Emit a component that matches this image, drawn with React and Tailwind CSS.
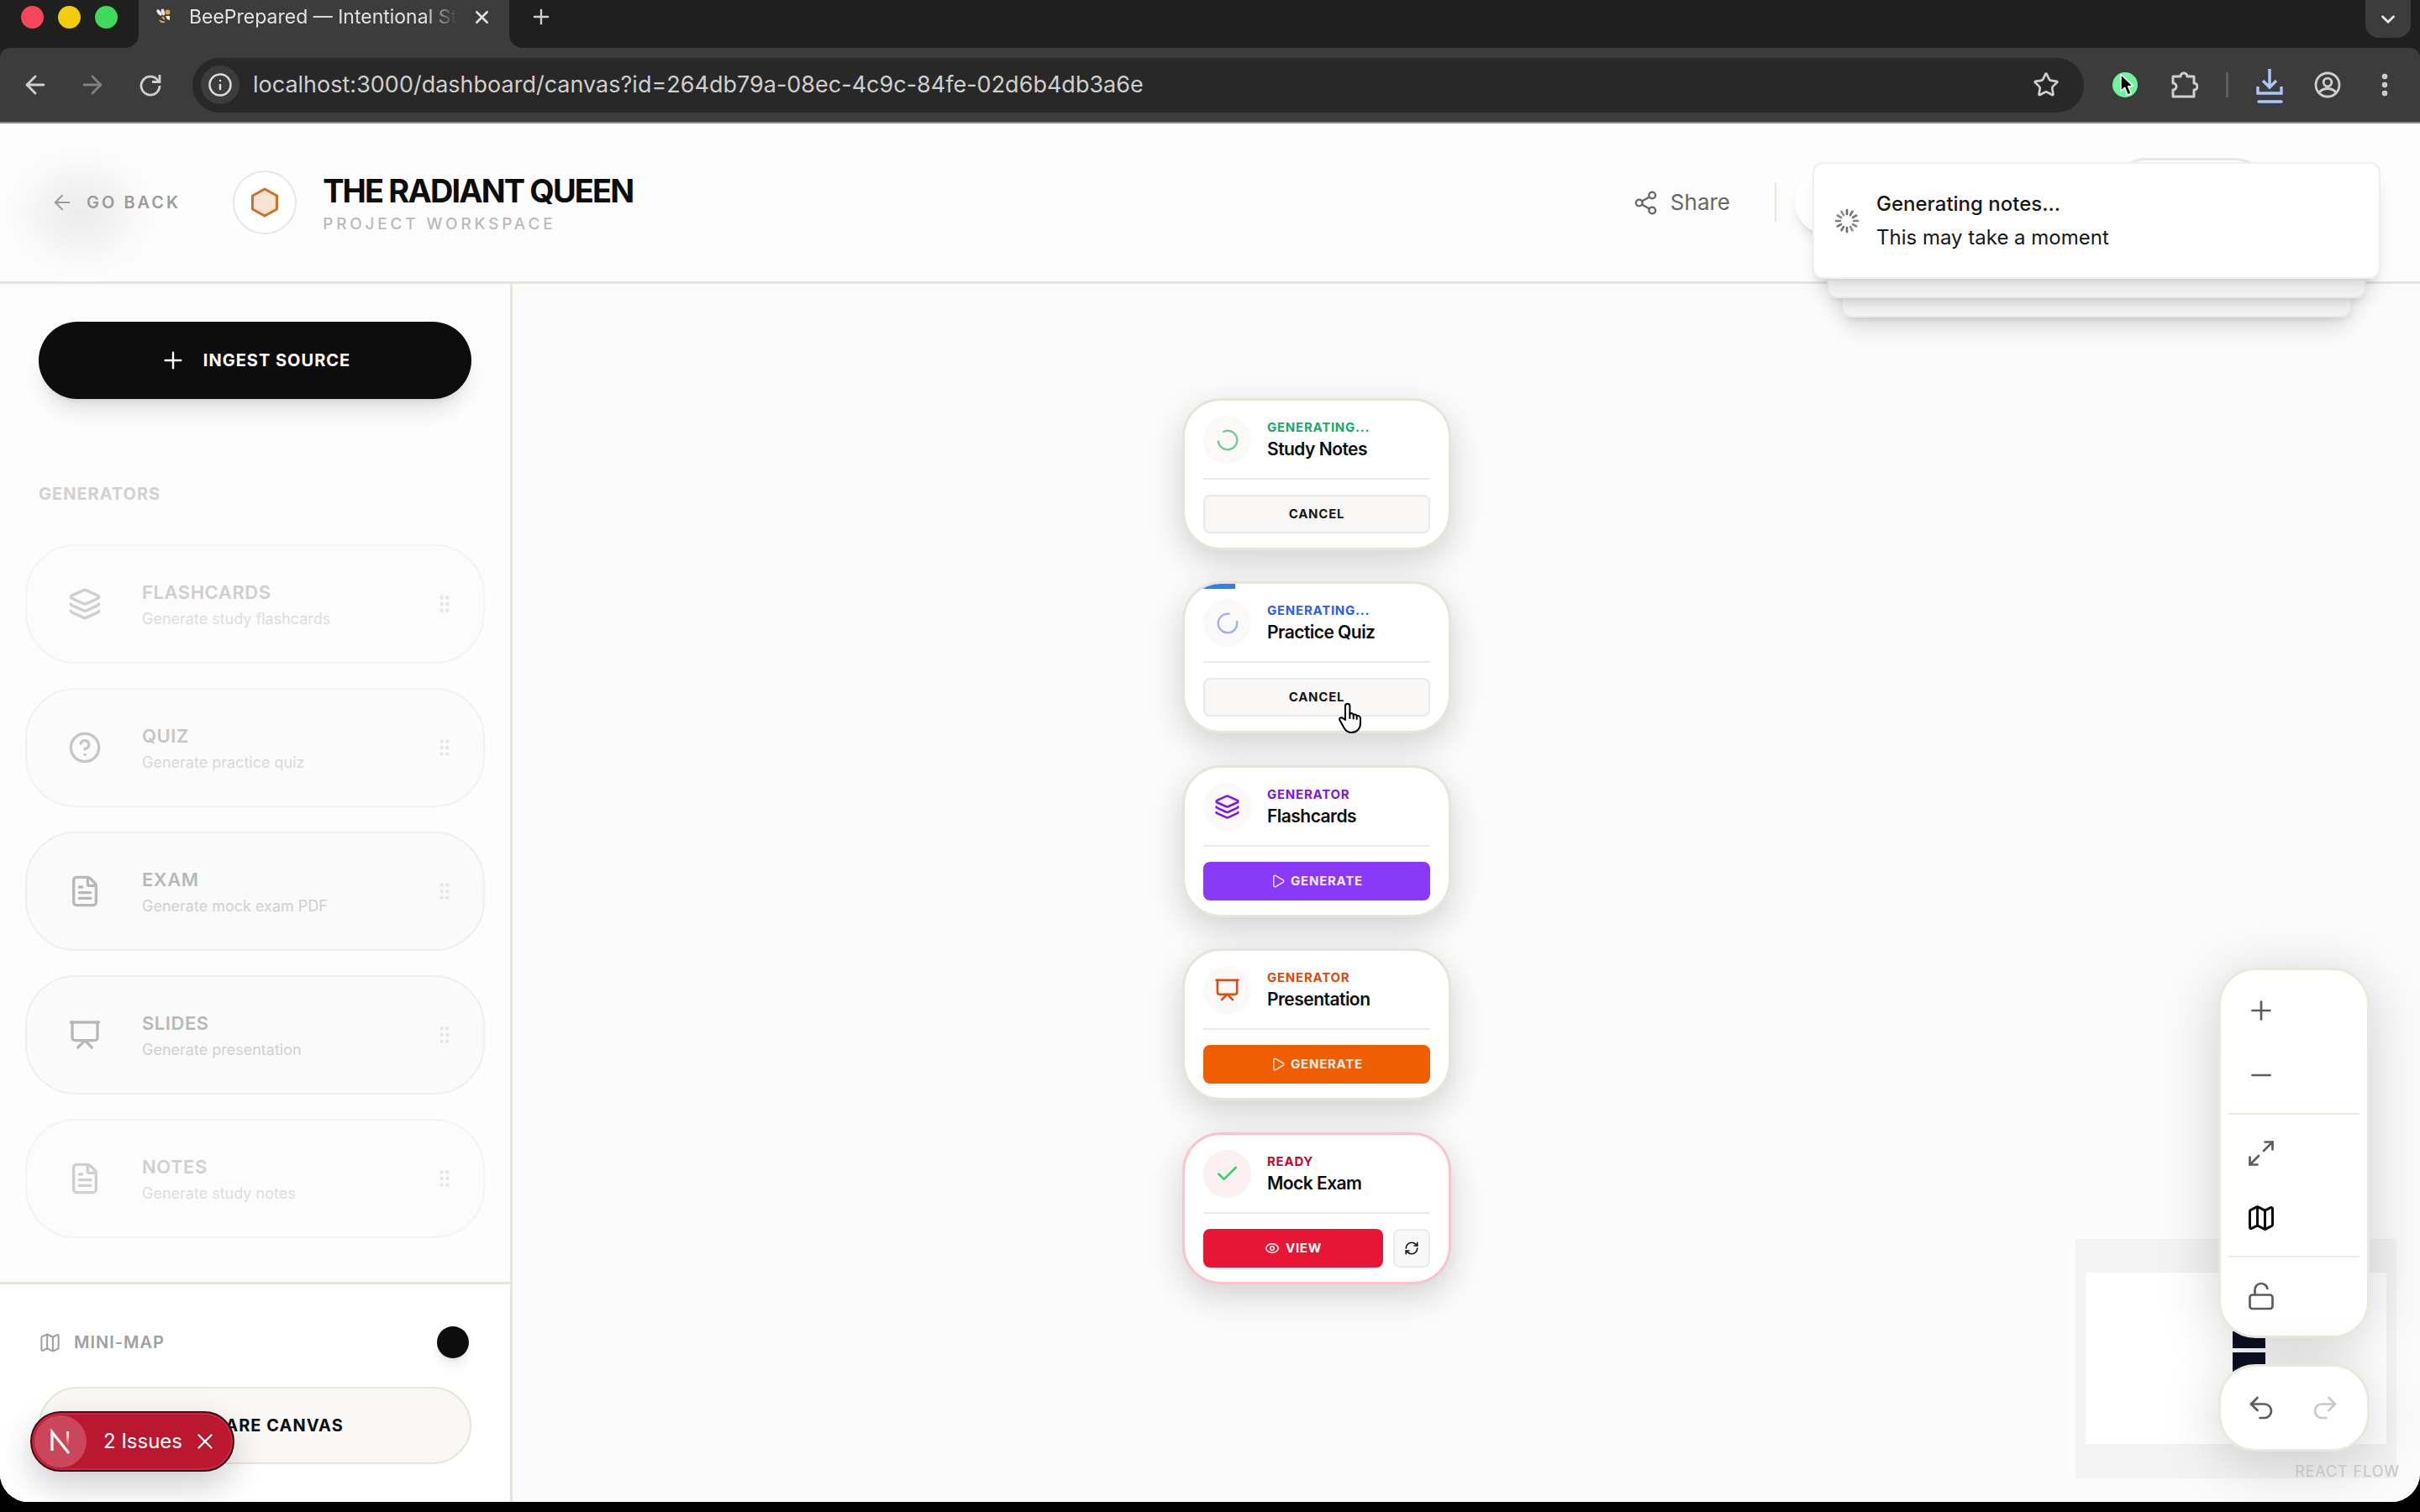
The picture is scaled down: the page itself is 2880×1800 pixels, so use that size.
import {
  ArrowLeft,
  ArrowRight,
  Check,
  ChevronDown,
  CircleHelp,
  EllipsisVertical,
  Eye,
  FileText,
  GripVertical,
  Info,
  Layers,
  LoaderCircle,
  LockOpen,
  Map,
  Maximize2,
  Minus,
  Play,
  Plus,
  Presentation,
  Redo2,
  RefreshCw,
  Share2,
  Star,
  Undo2,
  X,
} from 'lucide-react'
import clsx from 'clsx'

const generators = [
  { title: 'FLASHCARDS', text: 'Generate study flashcards', Icon: Layers, tone: 'text-[#cfcfcf]', sub: 'text-[#dddddd]', box: 'bg-[#fcfcfc] border-[#f4f4f4]' },
  { title: 'QUIZ', text: 'Generate practice quiz', Icon: CircleHelp, tone: 'text-[#c6c6c6]', sub: 'text-[#d8d8d8]', box: 'bg-[#fbfbfb] border-[#f2f2f2]' },
  { title: 'EXAM', text: 'Generate mock exam PDF', Icon: FileText, tone: 'text-[#b8b8b8]', sub: 'text-[#d0d0d0]', box: 'bg-[#fafafa] border-[#efefef]' },
  { title: 'SLIDES', text: 'Generate presentation', Icon: Presentation, tone: 'text-[#b8b8b8]', sub: 'text-[#d0d0d0]', box: 'bg-[#fafafa] border-[#efefef]' },
  { title: 'NOTES', text: 'Generate study notes', Icon: FileText, tone: 'text-[#d0d0d0]', sub: 'text-[#dddddd]', box: 'bg-[#fcfcfc] border-[#f4f4f4]' },
]

const nodes = [
  { y: 136, status: 'GENERATING...', title: 'Study Notes', kind: 'loading', color: 'text-[#17a96c]', icon: 'text-[#74c9a6] rotate-[-115deg]' },
  { y: 354, status: 'GENERATING...', title: 'Practice Quiz', kind: 'loading', color: 'text-[#2a60ea]', icon: 'text-[#a3aff5] rotate-[-10deg]', progress: 19 },
  { y: 573, status: 'GENERATOR', title: 'Flashcards', kind: 'idle', Icon: Layers, color: 'text-[#7d16e6]', icon: 'text-[#7d16e6]', button: 'bg-[#8a39f8]' },
  { y: 791, status: 'GENERATOR', title: 'Presentation', kind: 'idle', Icon: Presentation, color: 'text-[#dc4a10]', icon: 'text-[#e04a0c]', button: 'bg-[#f05e04]' },
  { y: 1010, status: 'READY', title: 'Mock Exam', kind: 'ready', color: 'text-[#bd0a2e]' },
]

function TabStrip() {
  return (
    <div className="flex items-start bg-[#1f1f1f] h-[57px] pl-[25px] pr-[11px]">
      <div className="flex items-center gap-[17px] h-10 w-[140px]">
        <span className="size-[27px] rounded-full bg-[#f6465b]" />
        <span className="size-[27px] rounded-full bg-[#f3cc0b]" />
        <span className="size-[27px] rounded-full bg-[#3dda5b]" />
      </div>
      <div className="relative h-full w-[441px] bg-[#3c3c3c] flex pl-5 pr-5">
        <svg className="absolute -left-4 bottom-0" width="16" height="16" viewBox="0 0 16 16" fill="#3c3c3c">
          <path d="M16 0v16H0A16 16 0 0 0 16 0z" />
        </svg>
        <svg className="absolute -right-4 bottom-0" width="16" height="16" viewBox="0 0 16 16" fill="#3c3c3c">
          <path d="M0 0v16h16A16 16 0 0 1 0 0z" />
        </svg>
        <div className="flex items-center h-10 w-full">
          <svg width="20" height="20" viewBox="0 0 20 20">
            <ellipse cx="4.500" cy="5" rx="2" ry="4.200" fill="#f2efe6" transform="rotate(-38 4.500 5)" />
            <ellipse cx="9" cy="4.500" rx="2" ry="4" fill="#e9e4d6" transform="rotate(-14 9 4.500)" />
            <circle cx="14.500" cy="4.500" r="3" fill="#d9a441" />
            <path d="M8 10l3 3M5 14q2 3 6 2" stroke="#d9a441" strokeWidth="2" fill="none" />
            <path d="M12 9h5v5l-3-1z" fill="#f2efe6" />
          </svg>
          <span className="ml-5 whitespace-nowrap text-[23px] leading-8 text-[#e2e2e2] [mask-image:linear-gradient(to_right,#000_88%,transparent)]">
            BeePrepared — Intentional St
          </span>
          <button className="ml-auto text-[#e2e2e2]" aria-label="Close tab">
            <X size={25} strokeWidth={2.4} />
          </button>
        </div>
      </div>
      <button className="flex items-center h-10 ml-6 text-[#d0d0d0]" aria-label="New tab">
        <Plus size={28} strokeWidth={2} />
      </button>
      <button className="ml-auto flex items-center justify-center w-[54px] h-[45px] rounded-b-2xl bg-[#3c3c3c] text-[#e8e8e8]" aria-label="Search tabs">
        <ChevronDown size={26} strokeWidth={2.6} />
      </button>
    </div>
  )
}

function Toolbar() {
  return (
    <div className="bg-[#1f1f1f]">
      <div className="flex items-center h-[90px] bg-[#3c3c3c] rounded-t-xl border-b-2 border-[#8b8b8b] px-[25px]">
        <button className="text-[#cfcfcf]" aria-label="Back">
          <ArrowLeft size={34} strokeWidth={2} />
        </button>
        <button className="ml-[34px] text-[#808080]" aria-label="Forward">
          <ArrowRight size={34} strokeWidth={2} />
        </button>
        <button className="ml-[38px]" aria-label="Reload">
          <svg width="28" height="28" viewBox="0 0 28 28" fill="none" stroke="#cfcfcf" strokeWidth="2.800">
            <path d="M23.500 9.500A11 11 0 1 0 25 15" />
            <path d="M25 2v8.500h-9" />
          </svg>
        </button>
        <div className="flex-1 flex items-center h-[65px] ml-9 pl-[10px] pr-[29px] rounded-full bg-[#282828]">
          <span className="flex items-center justify-center size-[46px] rounded-full bg-[#3c3c3c] text-[#dedede]">
            <Info size={30} strokeWidth={2} />
          </span>
          <input
            className="flex-1 ml-4 bg-transparent text-[27px] leading-9 text-[#cfcfcf] outline-none"
            aria-label="Address"
            defaultValue="localhost:3000/dashboard/canvas?id=264db79a-08ec-4c9c-84fe-02d6b4db3a6e"
          />
          <button className="text-[#cfcfcf]" aria-label="Bookmark">
            <Star size={32} strokeWidth={2} />
          </button>
        </div>
        <button className="ml-[34px]" aria-label="Recorder extension">
          <svg width="30" height="30" viewBox="0 0 30 30">
            <circle cx="15" cy="15" r="15" fill="#6ff59b" />
            <path d="M10 2.500v20l4.600-4.200 3.400 8.600 4.200-1.700-3.500-8.300 5.600-.6z" fill="#000" stroke="#fff" strokeWidth="1.500" strokeLinejoin="round" />
          </svg>
        </button>
        <button className="ml-10" aria-label="Extensions">
          <svg width="32" height="34" viewBox="0 0 32 34" fill="none" stroke="#cfcfcf" strokeWidth="3" strokeLinejoin="round">
            <path d="M2 7h9a4 4 0 0 1 8 0h8v8a4 4 0 0 1 0 8v8H2v-8a4 4 0 0 0 0-8z" />
          </svg>
        </button>
        <span className="w-[3px] h-[30px] ml-[33px] bg-[#5e5e5e]" />
        <button className="ml-8" aria-label="Downloads">
          <svg className="mt-1" width="34" height="42" viewBox="0 0 34 42" fill="none" stroke="#a9c7fa" strokeWidth="3.400">
            <path d="M17 0v22M9 14l8 8 8-8M3 21v8h28v-8" />
            <path d="M4 39h27" strokeLinecap="round" />
          </svg>
        </button>
        <button className="ml-[35px]" aria-label="Profile">
          <svg width="34" height="34" viewBox="0 0 34 34" fill="none" stroke="#cfcfcf" strokeWidth="2.800">
            <circle cx="17" cy="17" r="14" />
            <circle cx="17" cy="14" r="4.800" />
            <path d="M7 26c5-6 15-6 20 0" />
          </svg>
        </button>
        <button className="ml-[34px] text-[#cfcfcf]" aria-label="Menu">
          <EllipsisVertical size={34} strokeWidth={2.600} />
        </button>
      </div>
    </div>
  )
}

function Toast() {
  return (
    <div className="absolute top-[46px] right-[47px] w-[676px] z-20" role="status">
      <div className="absolute top-20 inset-x-[34px] h-[105px] rounded-xl bg-[#fbfbfb] border-2 border-[#f0f0f0] shadow-xl" />
      <div className="absolute top-14 inset-x-[17px] h-[106px] rounded-xl bg-[#fbfbfb] border-2 border-[#f0f0f0] shadow-xl" />
      <div className="relative flex items-center h-[139px] pl-6 rounded-xl bg-white border-2 border-[#efefef] shadow-xl">
        <svg width="30" height="30" viewBox="0 0 30 30" stroke="#6a6a6a" strokeWidth="2.600" strokeLinecap="round">
          {Array.from({ length: 12 }, (_, i) => (
            <path key={i} d="M15 2v5" transform={`rotate(${i * 30} 15 15)`} strokeOpacity={1 - (i % 6) * 0.05} />
          ))}
        </svg>
        <div className="ml-5 text-[24px] leading-10 text-[#171717]">
          <div className="font-medium">Generating notes...</div>
          <div>This may take a moment</div>
        </div>
      </div>
    </div>
  )
}

function Header() {
  return (
    <header className="relative flex items-center h-[191px] pl-[60px] bg-[#fdfdfd] border-b-3 border-[#e6e6dc]">
      <div className="absolute left-0 top-0 w-[200px] h-full bg-[radial-gradient(closest-side_at_48%_56%,#ececec,#f2f2f2_40%,#f9f9f9_72%,transparent)]" />
      <a href="#" className="relative flex items-center text-[#9b9b9b]">
        <ArrowLeft size={28} strokeWidth={1.800} />
        <span className="ml-[15px] text-[20px] leading-7 font-semibold tracking-[0.15em]">GO BACK</span>
      </a>
      <div className="flex items-center justify-center size-[76px] ml-[62px] rounded-full bg-white border-2 border-[#e6e6e6]">
        <svg width="36" height="40" viewBox="0 0 36 40" fill="#f7e2d5" stroke="#cd7320" strokeWidth="3" strokeLinejoin="round">
          <path d="M18 4l14.500 8v16L18 36 3.500 28V12z" />
        </svg>
      </div>
      <div className="ml-[31px] pt-[6px]">
        <h1 className="text-[38px] leading-10 font-bold tracking-tighter text-[#0d0d0d]">THE RADIANT QUEEN</h1>
        <p className="text-[19px] leading-7 font-medium tracking-[0.2em] text-[#b9b9b9] mt-[6px]">PROJECT WORKSPACE</p>
      </div>
      <div className="ml-auto flex items-center mr-[34px]">
        <button className="flex items-center text-[#666666]">
          <Share2 size={31} strokeWidth={1.800} />
          <span className="ml-[14px] text-[26px] leading-8">Share</span>
        </button>
        <span className="w-[2px] h-[46px] ml-[53px] bg-[#e6e6d8]" />
        <div className="flex items-center w-[732px] h-[106px] pl-[22px]">
          <span className="size-[76px] rounded-full bg-white shadow-lg" />
          <button className="w-[186px] h-[106px] ml-[302px] rounded-[40px] bg-white border-3 border-[#e8e8da]" aria-label="Account" />
        </div>
      </div>
      <Toast />
    </header>
  )
}

function Sidebar() {
  return (
    <aside className="flex flex-col w-[610px] shrink-0 bg-[#fdfdfd] border-r-3 border-[#e6e6dc]">
      <div className="flex-1 pt-[45px]">
        <div className="px-[46px]">
          <button className="flex items-center justify-center gap-5 w-full h-[92px] rounded-full bg-[#0d0d0d] text-white shadow-xl">
            <Plus size={32} strokeWidth={1.800} />
            <span className="text-[20px] leading-7 font-bold tracking-wider">INGEST SOURCE</span>
          </button>
          <h2 className="mt-[99px] text-[20px] leading-7 font-bold tracking-wider text-[#d1d1d1]">GENERATORS</h2>
        </div>
        <div className="flex flex-col gap-[29px] px-[30px] mt-[46px]">
          {generators.map(({ title, text, Icon, tone, sub, box }) => (
            <div key={title} className={clsx('flex items-center h-[142px] rounded-[60px] border-2 pl-[49px] pr-[33px]', box)}>
              <Icon className={tone} size={40} strokeWidth={2} />
              <div className="ml-12 pt-1">
                <div className={clsx('text-[22px] leading-8 font-semibold tracking-wide', tone)}>{title}</div>
                <div className={clsx('text-[18px] leading-8', sub)}>{text}</div>
              </div>
              <GripVertical className="ml-auto text-[#e6e6e6]" size={26} strokeWidth={2} />
            </div>
          ))}
        </div>
      </div>
      <div className="px-[46px] pt-[50px] pb-[45px] border-t-3 border-[#e6e6dc] bg-white">
        <div className="flex items-center justify-between h-[38px] pr-[3px] text-[#a0a0a0]">
          <label htmlFor="minimap" className="flex items-center gap-[15px]">
            <Map size={27} strokeWidth={1.800} />
            <span className="text-[20px] leading-7 font-semibold tracking-wider">MINI-MAP</span>
          </label>
          <input id="minimap" type="checkbox" defaultChecked className="appearance-none size-[38px] rounded-full bg-[#0d0d0d] shadow-lg" />
        </div>
        <button className="flex items-center justify-center gap-4 w-full h-[92px] mt-[34px] rounded-full bg-[#f9f8f6] border-2 border-[#e6e6dc] text-[#0d0d0d]">
          <Share2 size={24} strokeWidth={2} />
          <span className="text-[20px] leading-7 font-bold tracking-wider">SHARE CANVAS</span>
        </button>
      </div>
    </aside>
  )
}

function NodeIcon({ node }) {
  if (node.kind === 'loading') return <LoaderCircle className={node.icon} size={30} strokeWidth={2} />
  if (node.kind === 'ready') return <Check className="text-[#2fd75f]" size={31} strokeWidth={2} />
  const { Icon } = node
  return <Icon className={node.icon} size={31} strokeWidth={2} />
}

function HandCursor() {
  return (
    <svg width="30" height="38" viewBox="0 0 30 38" fill="#fff" stroke="#000" strokeWidth="2" strokeLinejoin="round" strokeLinecap="round">
      <path d="M9 21V4.500a2.700 2.700 0 0 1 5.400 0V14c1.600-1.600 4-.8 4.300 1 1.600-1.200 3.700-.3 4 1.400 2-.9 4.300.3 4.300 2.600V25c0 6-4 11-10.500 11-4.500 0-7-2-9-5.500L2.500 21.500c-1.300-2.600 1.600-4.300 3.500-2.600z" />
      <path d="M14.400 14v5M18.700 15v4.500M22.700 16.400v3.600" fill="none" />
    </svg>
  )
}

function FlowNode({ node }) {
  const ready = node.kind === 'ready'
  return (
    <article
      className={clsx(
        'absolute left-[797px] w-[320px] rounded-[46px] overflow-hidden border-3 bg-white px-[22px] pt-[18px] pb-[17px]',
        'shadow-[0_14px_40px_rgba(0,0,0,0.17)]',
        ready ? 'border-[#fbc3cd]' : 'border-[#e5e5d9]',
      )}
      style={{ top: node.y }}
    >
      {node.progress && (
        <div className="absolute left-0 top-0 h-[6px] bg-[#367cf1]" style={{ width: `${node.progress}%` }} />
      )}
      <div className="flex items-start">
        <span className={clsx('flex items-center justify-center size-[57px] rounded-full', ready ? 'bg-[#fcf0f2]' : 'bg-[#faf9f8]')}>
          <NodeIcon node={node} />
        </span>
        <div className="ml-[19px] pt-1">
          <div className={clsx('text-[15px] leading-5 font-bold tracking-wider', node.color)}>{node.status}</div>
          <h3 className="text-[21px] leading-8 font-semibold tracking-tight text-[#0d0d0d]">{node.title}</h3>
        </div>
      </div>
      <div className="flex gap-3 mt-[17px] pt-[18px] border-t-2 border-[#ecece4]">
        {node.kind === 'loading' && (
          <button className="relative w-full h-[46px] rounded-lg bg-[#f9f8f7] border-2 border-[#e9e9e7] text-[15px] leading-5 font-bold tracking-wider text-[#171717]">
            CANCEL
          </button>
        )}
        {node.kind === 'idle' && (
          <button className={clsx('flex items-center justify-center gap-[6px] w-full h-[46px] rounded-lg text-[15px] leading-5 font-bold tracking-wider text-white/90', node.button)}>
            <Play size={18} strokeWidth={1.800} />
            GENERATE
          </button>
        )}
        {ready && (
          <>
            <button className="flex items-center justify-center gap-[7px] flex-1 h-[46px] rounded-lg bg-[#e91535] text-[15px] leading-5 font-bold tracking-wider text-white">
              <Eye size={18} strokeWidth={2} />
              VIEW
            </button>
            <button className="flex items-center justify-center w-[44px] h-[46px] rounded-lg bg-[#f9f8f8] border-2 border-[#ebebea] text-[#171717]" aria-label="Regenerate">
              <RefreshCw size={18} strokeWidth={2.200} />
            </button>
          </>
        )}
      </div>
    </article>
  )
}

function Controls() {
  const panel = 'w-[180px] rounded-[44px] bg-white border-3 border-[#e9e9df] shadow-[0_12px_70px_rgba(0,0,0,0.18)] text-[#5c5c5c]'
  const row = 'flex items-center h-[77px] w-full pl-[21px]'
  return (
    <div className="absolute right-[60px] bottom-[60px] flex flex-col gap-[31px]">
      <div className={clsx(panel, 'px-[9px] py-[9px]')}>
        <button className={row} aria-label="Zoom in"><Plus size={36} strokeWidth={1.800} /></button>
        <button className={row} aria-label="Zoom out"><Minus size={36} strokeWidth={1.800} /></button>
        <div className="h-[2px] my-[7px] bg-[#eaeadf]" />
        <button className={row} aria-label="Fit view"><Maximize2 size={36} strokeWidth={1.800} /></button>
        <button className={clsx(row, 'text-[#0d0d0d]')} aria-label="Toggle mini-map"><Map size={36} strokeWidth={2} /></button>
        <div className="h-[2px] my-[7px] bg-[#eaeadf]" />
        <button className={row} aria-label="Lock canvas"><LockOpen size={36} strokeWidth={1.800} /></button>
      </div>
      <div className={clsx(panel, 'flex items-center gap-10 h-[104px] pl-[30px]')}>
        <button aria-label="Undo"><Undo2 size={36} strokeWidth={1.800} /></button>
        <button className="text-[#c9c9c9]" aria-label="Redo"><Redo2 size={36} strokeWidth={1.800} /></button>
      </div>
    </div>
  )
}

function MiniMap() {
  return (
    <svg className="absolute right-[28px] bottom-[28px]" width="382" height="285" viewBox="0 0 382 285">
      <path d="M0 0h382v285H0z" fill="#f3f3f3" />
      <path d="M12 40h358v204H12z" fill="#fff" />
      <path d="M187 63h39v20h-39zM187 88h39v20h-39zM187 110h39v20h-39zM187 135h39v23h-39z" fill="#0c1023" />
    </svg>
  )
}

function Canvas() {
  return (
    <main className="relative flex-1 overflow-hidden bg-[#fbfbfb]">
      {nodes.map((node) => (
        <FlowNode key={node.title} node={node} />
      ))}
      {/* pointer resting on the quiz cancel button */}
      <div className="absolute left-[982px] top-[498px]">
        <HandCursor />
      </div>
      <MiniMap />
      <Controls />
      <a href="#" className="absolute right-6 bottom-[22px] text-[18px] leading-7 tracking-wider text-[#c6c6c6]">
        REACT FLOW
      </a>
    </main>
  )
}

function IssuesBadge() {
  return (
    <div className="absolute left-9 bottom-9 flex items-center w-[243px] h-[72px] pl-[3px] rounded-full bg-[#ba1830] border-2 border-[#30141a] inset-shadow-[0_0_0_2px_#d5233f] shadow-[0_16px_40px_rgba(0,0,0,0.2)] text-white">
      <span className="flex items-center justify-center size-[62px] rounded-full bg-[#ca475b]">
        <svg width="26" height="30" viewBox="0 0 26 30" fill="none" strokeWidth="3.200">
          <defs>
            <linearGradient id="nextStroke" x1="0" y1="0" x2="0" y2="1">
              <stop offset="0" stopColor="#fff" />
              <stop offset="1" stopColor="#fff" stopOpacity="0" />
            </linearGradient>
          </defs>
          <path d="M3 26V4l20 25" stroke="#fff" />
          <rect x="20" y="3" width="3" height="17" fill="url(#nextStroke)" />
        </svg>
      </span>
      <button className="ml-5 text-[24px] leading-8">2 Issues</button>
      <button className="ml-3" aria-label="Dismiss"><X size={30} strokeWidth={1.800} /></button>
    </div>
  )
}

export default function App() {
  return (
    <div className="h-screen min-h-[1500px] pb-3 bg-black font-[Inter,'Liberation_Sans',sans-serif]">
      <div className="relative flex flex-col h-full overflow-hidden rounded-b-[34px] bg-[#fdfdfd]">
        <TabStrip />
        <Toolbar />
        <Header />
        <div className="flex flex-1 min-h-0">
          <Sidebar />
          <Canvas />
        </div>
        <IssuesBadge />
      </div>
    </div>
  )
}
